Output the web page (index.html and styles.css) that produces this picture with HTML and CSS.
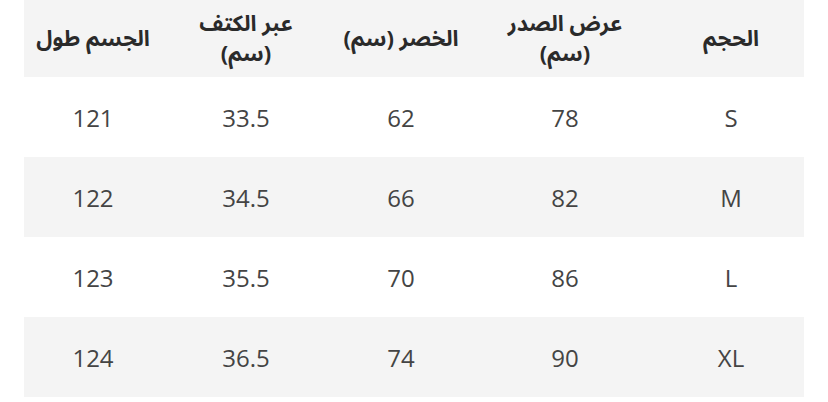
FILE: index.html
```html
<!DOCTYPE html>
<html lang="ar">
<head>
<meta charset="utf-8">
<link rel="stylesheet" href="styles.css">
</head>
<body>
<table class="sizes" dir="rtl">
  <thead>
    <tr>
      <th class="c-size">الحجم</th>
      <th class="c-chest">عرض الصدر<br>(سم)</th>
      <th class="c-waist">الخصر (سم)</th>
      <th class="c-shoulder">عبر الكتف<br>(سم)</th>
      <th class="c-length">الجسم طول</th>
    </tr>
  </thead>
  <tbody>
    <tr><td>S</td><td>78</td><td>62</td><td>33.5</td><td>121</td></tr>
    <tr class="alt"><td>M</td><td>82</td><td>66</td><td>34.5</td><td>122</td></tr>
    <tr><td>L</td><td>86</td><td>70</td><td>35.5</td><td>123</td></tr>
    <tr class="alt"><td>XL</td><td>90</td><td>74</td><td>36.5</td><td>124</td></tr>
  </tbody>
</table>
</body>
</html>
```

FILE: styles.css
```css
html, body {
  margin: 0;
  padding: 0;
  background: #ffffff;
}

.sizes {
  margin: 0 24px;
  width: 780px;
  border-collapse: collapse;
  table-layout: fixed;
  font-family: "Open Sans", "DejaVu Sans", sans-serif;
}

.sizes th {
  height: 77px;
  padding: 0;
  background: #f4f4f4;
  color: #2a2a2a;
  font-family: "Noto Sans Arabic", "DejaVu Sans", sans-serif;
  font-weight: bold;
  font-size: 22px;
  line-height: 30px;
  text-align: center;
  vertical-align: middle;
}

.sizes td {
  height: 80px;
  padding: 0;
  color: #444444;
  font-size: 24px;
  text-align: center;
  vertical-align: middle;
}

.sizes .alt td {
  background: #f4f4f4;
}

.c-size { width: 146px; }
.c-chest { width: 186px; }
.c-waist { width: 142px; }
.c-shoulder { width: 168px; }
.c-length { width: 138px; }
```
